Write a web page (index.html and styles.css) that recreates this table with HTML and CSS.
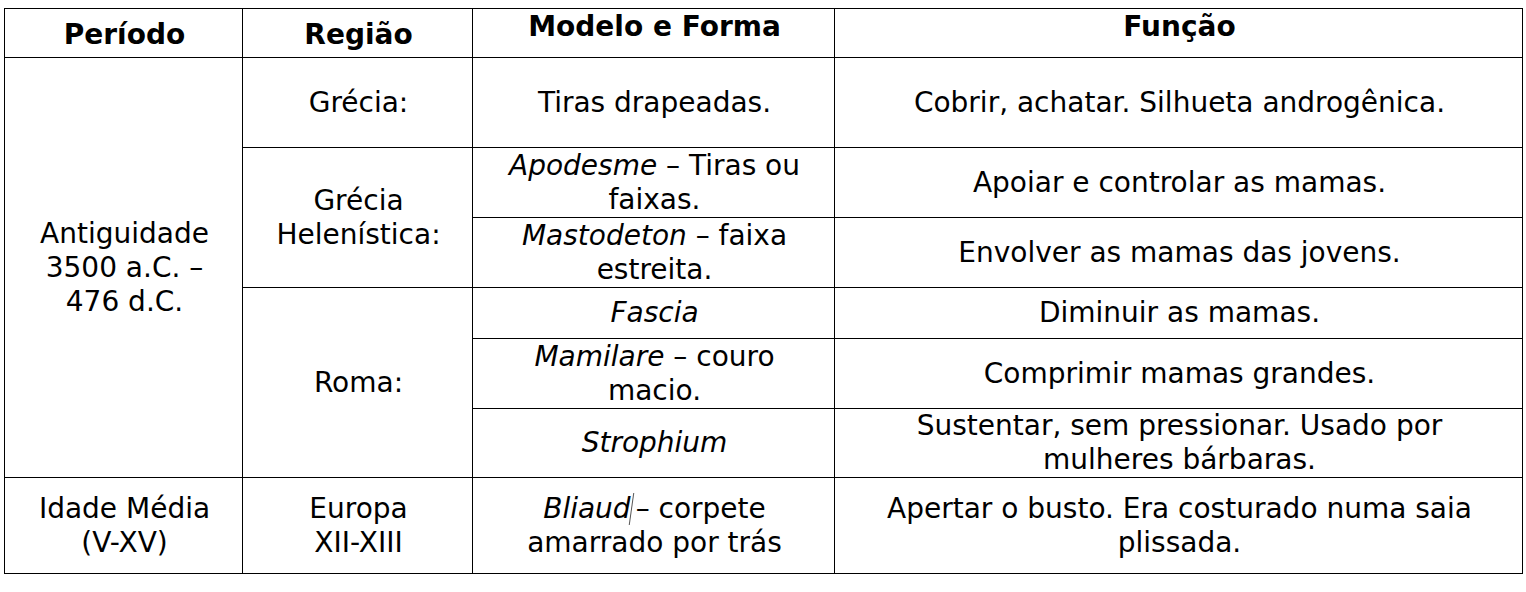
FILE: index.html
```html
<!DOCTYPE html>
<html lang="pt">
<head>
<meta charset="utf-8">
<title>Tabela</title>
<link rel="stylesheet" href="styles.css">
</head>
<body>
<table class="tbl">
  <colgroup>
    <col class="c1"><col class="c2"><col class="c3"><col class="c4">
  </colgroup>
  <tr class="r-head">
    <th class="th-low">Período</th>
    <th class="th-low">Região</th>
    <th class="th-top">Modelo e Forma</th>
    <th class="th-top">Função</th>
  </tr>
  <tr class="r-90">
    <td rowspan="6">Antiguidade<br>3500 a.C. –<br>476 d.C.</td>
    <td>Grécia:</td>
    <td>Tiras drapeadas.</td>
    <td>Cobrir, achatar. Silhueta androgênica.</td>
  </tr>
  <tr class="r-70">
    <td rowspan="2">Grécia<br>Helenística:</td>
    <td><em>Apodesme</em> – Tiras ou<br>faixas.</td>
    <td>Apoiar e controlar as mamas.</td>
  </tr>
  <tr class="r-70">
    <td><em>Mastodeton</em> – faixa<br>estreita.</td>
    <td>Envolver as mamas das jovens.</td>
  </tr>
  <tr class="r-51">
    <td rowspan="3">Roma:</td>
    <td><em>Fascia</em></td>
    <td>Diminuir as mamas.</td>
  </tr>
  <tr class="r-70">
    <td><em>Mamilare</em> – couro<br>macio.</td>
    <td>Comprimir mamas grandes.</td>
  </tr>
  <tr class="r-69">
    <td><em>Strophium</em></td>
    <td>Sustentar, sem pressionar. Usado por<br>mulheres bárbaras.</td>
  </tr>
  <tr class="r-96">
    <td>Idade Média<br>(V-XV)</td>
    <td>Europa<br>XII-XIII</td>
    <td><em>Bliaud</em><span class="caret"></span>– corpete<br>amarrado por trás</td>
    <td>Apertar o busto. Era costurado numa saia<br>plissada.</td>
  </tr>
</table>
</body>
</html>
```

FILE: styles.css
```css
html, body {
  margin: 0;
  padding: 0;
  background: #ffffff;
}

body {
  font-family: "DejaVu Sans", Verdana, sans-serif;
  font-size: 28px;
  color: #000000;
}

.tbl {
  margin: 8px 0 0 4px;
  border-collapse: collapse;
  table-layout: fixed;
  width: 1518px;
}

.c1 { width: 238px; }
.c2 { width: 230px; }
.c3 { width: 362px; }
.c4 { width: 688px; }

.tbl th,
.tbl td {
  border: 1px solid #000000;
  padding: 0 2px 0 4px;
  text-align: center;
  vertical-align: middle;
  line-height: 34px;
  white-space: nowrap;
}

.tbl th {
  font-weight: bold;
}

.tbl .th-low {
  vertical-align: top;
  padding-top: 9px;
}

.tbl .th-top {
  vertical-align: top;
  padding-top: 1px;
}

.tbl em {
  font-style: italic;
}

.r-head { height: 49px; }
.r-90 { height: 90px; }
.r-70 { height: 70px; }
.r-51 { height: 51px; }
.r-69 { height: 69px; }
.r-96 { height: 96px; }

.caret {
  display: inline-block;
  width: 0;
  height: 32px;
  border-left: 1px solid #555555;
  vertical-align: -7px;
  margin: 0 4px 0 0;
  transform: skewX(-8deg);
}
```
